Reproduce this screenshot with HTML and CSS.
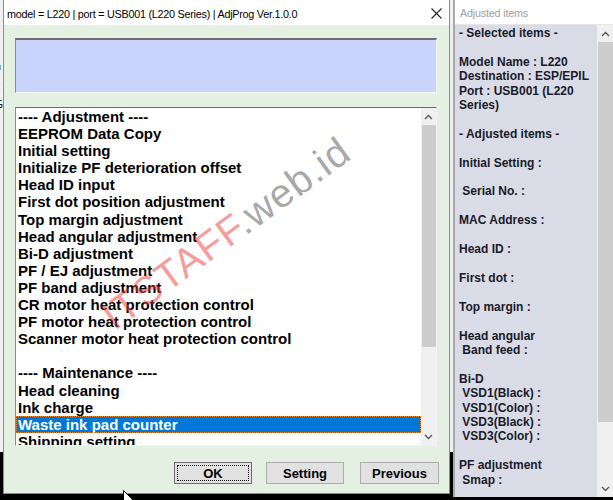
FILE: index.html
```html
<!DOCTYPE html>
<html>
<head>
<meta charset="utf-8">
<title>AdjProg</title>
<link rel="stylesheet" href="styles.css">
</head>
<body>
<div class="desktop">
  <div class="behind">
    <span class="frag f1">c</span>
    <span class="frag f2">a</span>
    <span class="frag f3">c</span>
    <span class="frag f4">G</span>
  </div>

  <div class="dialog">
    <div class="titlebar">
      <span class="title">model = L220 | port = USB001 (L220 Series) | AdjProg Ver.1.0.0</span>
      <svg class="close" width="11" height="11" viewBox="0 0 11 11"><path d="M0.5 0.5 L10.5 10.5 M10.5 0.5 L0.5 10.5" stroke="#222" stroke-width="1.1" fill="none"/></svg>
    </div>
    <div class="dlg-body">
      <div class="msgbox"></div>
      <div class="listbox">
        <ul class="items">
          <li>---- Adjustment ----</li>
          <li>EEPROM Data Copy</li>
          <li>Initial setting</li>
          <li>Initialize PF deterioration offset</li>
          <li>Head ID input</li>
          <li>First dot position adjustment</li>
          <li>Top margin adjustment</li>
          <li>Head angular adjustment</li>
          <li>Bi-D adjustment</li>
          <li>PF / EJ adjustment</li>
          <li>PF band adjustment</li>
          <li>CR motor heat protection control</li>
          <li>PF motor heat protection control</li>
          <li>Scanner motor heat protection control</li>
          <li>&nbsp;</li>
          <li>---- Maintenance ----</li>
          <li>Head cleaning</li>
          <li>Ink charge</li>
          <li class="selected">Waste ink pad counter</li>
          <li>Shipping setting</li>
        </ul>
        <div class="vscroll">
          <div class="arrow"><svg width="9" height="6" viewBox="0 0 9 6"><path d="M1 5 L4.5 1.5 L8 5" stroke="#555" stroke-width="1.3" fill="none"/></svg></div>
          <div class="track"><div class="thumb"></div></div>
          <div class="arrow"><svg width="9" height="6" viewBox="0 0 9 6"><path d="M1 1 L4.5 4.5 L8 1" stroke="#555" stroke-width="1.3" fill="none"/></svg></div>
        </div>
      </div>
      <div class="buttons">
        <div class="btn btn-default">OK</div>
        <div class="btn">Setting</div>
        <div class="btn btn-prev">Previous</div>
      </div>
    </div>
  </div>

  <div class="panel">
    <div class="panel-title">Adjusted items</div>
    <div class="panel-body">
      <div class="panel-text">- Selected items -

Model Name : L220
Destination : ESP/EPIL
Port : USB001 (L220
Series)

- Adjusted items -

Initial Setting :

 Serial No. :

MAC Address :

Head ID :

First dot :

Top margin :

Head angular
 Band feed :

Bi-D
 VSD1(Black) :
 VSD1(Color) :
 VSD3(Black) :
 VSD3(Color) :

PF adjustment
 Smap :</div>
      <div class="pscroll">
        <div class="arrow"><svg width="9" height="6" viewBox="0 0 9 6"><path d="M1 5 L4.5 1.5 L8 5" stroke="#555" stroke-width="1.3" fill="none"/></svg></div>
        <div class="ptrack"><div class="pthumb"></div></div>
        <div class="arrow"><svg width="9" height="6" viewBox="0 0 9 6"><path d="M1 1 L4.5 4.5 L8 1" stroke="#555" stroke-width="1.3" fill="none"/></svg></div>
      </div>
    </div>
  </div>

  <div class="watermark"><span class="wm-red">ITSTAFF</span><span class="wm-gray">.web.id</span></div>

  <svg class="cursor" width="13" height="20" viewBox="0 0 13 20"><path d="M0.5 0.5 L0.5 16 L4.2 12.5 L6.8 18.5 L9 17.5 L6.5 11.6 L11.5 11.6 Z" fill="#fff" stroke="#000" stroke-width="1"/></svg>
</div>
</body>
</html>
```

FILE: styles.css
```css
html, body {
  margin: 0;
  padding: 0;
}
body {
  width: 613px;
  height: 500px;
  overflow: hidden;
  font-family: "Liberation Sans", Arial, sans-serif;
}
.desktop {
  position: relative;
  width: 613px;
  height: 500px;
  background: linear-gradient(#f0f0f0 0, #f0f0f0 452px, #000 452px);
  overflow: hidden;
}

/* window behind, only a sliver visible */
.behind {
  position: absolute;
  left: -5px;
  top: 0;
  width: 12px;
  display: flex;
  flex-direction: column;
  font-family: "Noto Sans", sans-serif;
  font-size: 11px;
  line-height: 12px;
  color: #222;
}
.frag { display: block; }
.f1 { margin-top: 0; }
.f2 { margin-top: 48px; }
.f3 { margin-top: 8px; }
.f4 { margin-top: 6px; }

/* main dialog */
.dialog {
  position: absolute;
  left: 3px;
  top: 0;
  width: 447px;
  height: 494px;
  box-sizing: border-box;
  border-left: 1px solid #8c8c8c;
  border-right: 1px solid #8c8c8c;
  border-bottom: 1px solid #8c8c8c;
  background: #e3f0e2;
  display: flex;
  flex-direction: column;
}
.titlebar {
  height: 25px;
  flex: none;
  background: #fff;
  display: flex;
  align-items: center;
  justify-content: space-between;
  padding-left: 3px;
  padding-right: 7px;
}
.title {
  font-family: "Liberation Sans", Arial, sans-serif;
  font-size: 10.8px;
  letter-spacing: -0.25px;
  color: #000;
  white-space: nowrap;
  position: relative;
  top: 1px;
}
.close {
  display: block;
  position: relative;
  top: 1px;
}
.dlg-body {
  flex: 1;
  padding: 13px 12px 0 11px;
  display: flex;
  flex-direction: column;
}
.msgbox {
  height: 55px;
  box-sizing: border-box;
  background: #c7d3fb;
  border-top: 2px solid #6f6f6f;
  border-left: 1px solid #8a8a8a;
  border-right: 1px solid #f4f4f4;
  border-bottom: 1px solid #f4f4f4;
}
.listbox {
  margin-top: 14px;
  height: 339px;
  box-sizing: border-box;
  background: #fff;
  border-top: 1px solid #6b6b6b;
  border-left: 1px solid #8a8a8a;
  border-right: 1px solid #f4f4f4;
  border-bottom: 1px solid #f4f4f4;
  display: flex;
  overflow: hidden;
}
.items {
  flex: 1;
  list-style: none;
  margin: 0;
  padding: 0;
  overflow: hidden;
}
.items li {
  height: 17.1px;
  line-height: 17.1px;
  padding-left: 2px;
  font-size: 15px;
  font-weight: bold;
  color: #000;
  white-space: nowrap;
  box-sizing: border-box;
}
.items li.selected {
  background: #0078d7;
  color: #fff;
  outline: 1px dotted #e8893a;
  outline-offset: -1px;
}
.vscroll {
  width: 15px;
  flex: none;
  background: #f0f0f0;
  display: flex;
  flex-direction: column;
}
.arrow {
  height: 17px;
  flex: none;
  display: flex;
  align-items: center;
  justify-content: center;
}
.track {
  flex: 1;
  padding-left: 1px;
}
.thumb {
  height: 222px;
  background: #cdcdcd;
}
.buttons {
  margin-top: 16px;
  margin-right: -2px;
  display: flex;
  justify-content: flex-end;
  gap: 14px;
}
.btn {
  width: 78px;
  height: 22px;
  box-sizing: border-box;
  background: #e1e1e1;
  border: 1px solid #adadad;
  font-size: 13px;
  font-weight: bold;
  color: #000;
  display: flex;
  align-items: center;
  justify-content: center;
  position: relative;
}
.btn-default {
  border: 1px solid #6c6c6c;
}
.btn-default::after {
  content: "";
  position: absolute;
  left: 2px;
  top: 2px;
  right: 2px;
  bottom: 2px;
  border: 1px dotted #000;
}
.btn-prev {
  width: 79px;
  margin-left: 2px;
}

/* right panel */
.panel {
  position: absolute;
  left: 453px;
  top: 0;
  width: 160px;
  height: 497px;
  box-sizing: border-box;
  border-left: 2px solid #a9a9a9;
  background: #fff;
  display: flex;
  flex-direction: column;
}
.panel-title {
  height: 25px;
  flex: none;
  box-sizing: border-box;
  padding-left: 5px;
  font-family: "Liberation Sans", Arial, sans-serif;
  font-size: 10.8px;
  letter-spacing: -0.2px;
  line-height: 26px;
  color: #a0a0a0;
  border-bottom: 1px solid #e6e6e6;
}
.panel-body {
  flex: 1;
  display: flex;
  background: #d9dce6;
  overflow: hidden;
}
.panel-text {
  flex: 1;
  padding: 1px 0 0 4px;
  white-space: pre;
  font-size: 12px;
  line-height: 14.4px;
  font-weight: bold;
  color: #1a1a2a;
  overflow: hidden;
}
.pscroll {
  width: 16px;
  flex: none;
  background: #f0f0f0;
  display: flex;
  flex-direction: column;
}
.ptrack {
  flex: 1;
  padding-left: 1px;
}
.pthumb {
  height: 380px;
  background: #cdcdcd;
}

/* watermark */
.watermark {
  position: absolute;
  left: 118px;
  top: 296px;
  font-size: 40px;
  line-height: 40px;
  letter-spacing: 1px;
  white-space: nowrap;
  transform-origin: 0 100%;
  transform: rotate(-36deg);
  pointer-events: none;
}
.wm-red { color: rgba(236, 60, 60, 0.5); }
.wm-gray { color: rgba(110, 110, 110, 0.6); }

.cursor {
  position: absolute;
  left: 123px;
  top: 490px;
}
```
